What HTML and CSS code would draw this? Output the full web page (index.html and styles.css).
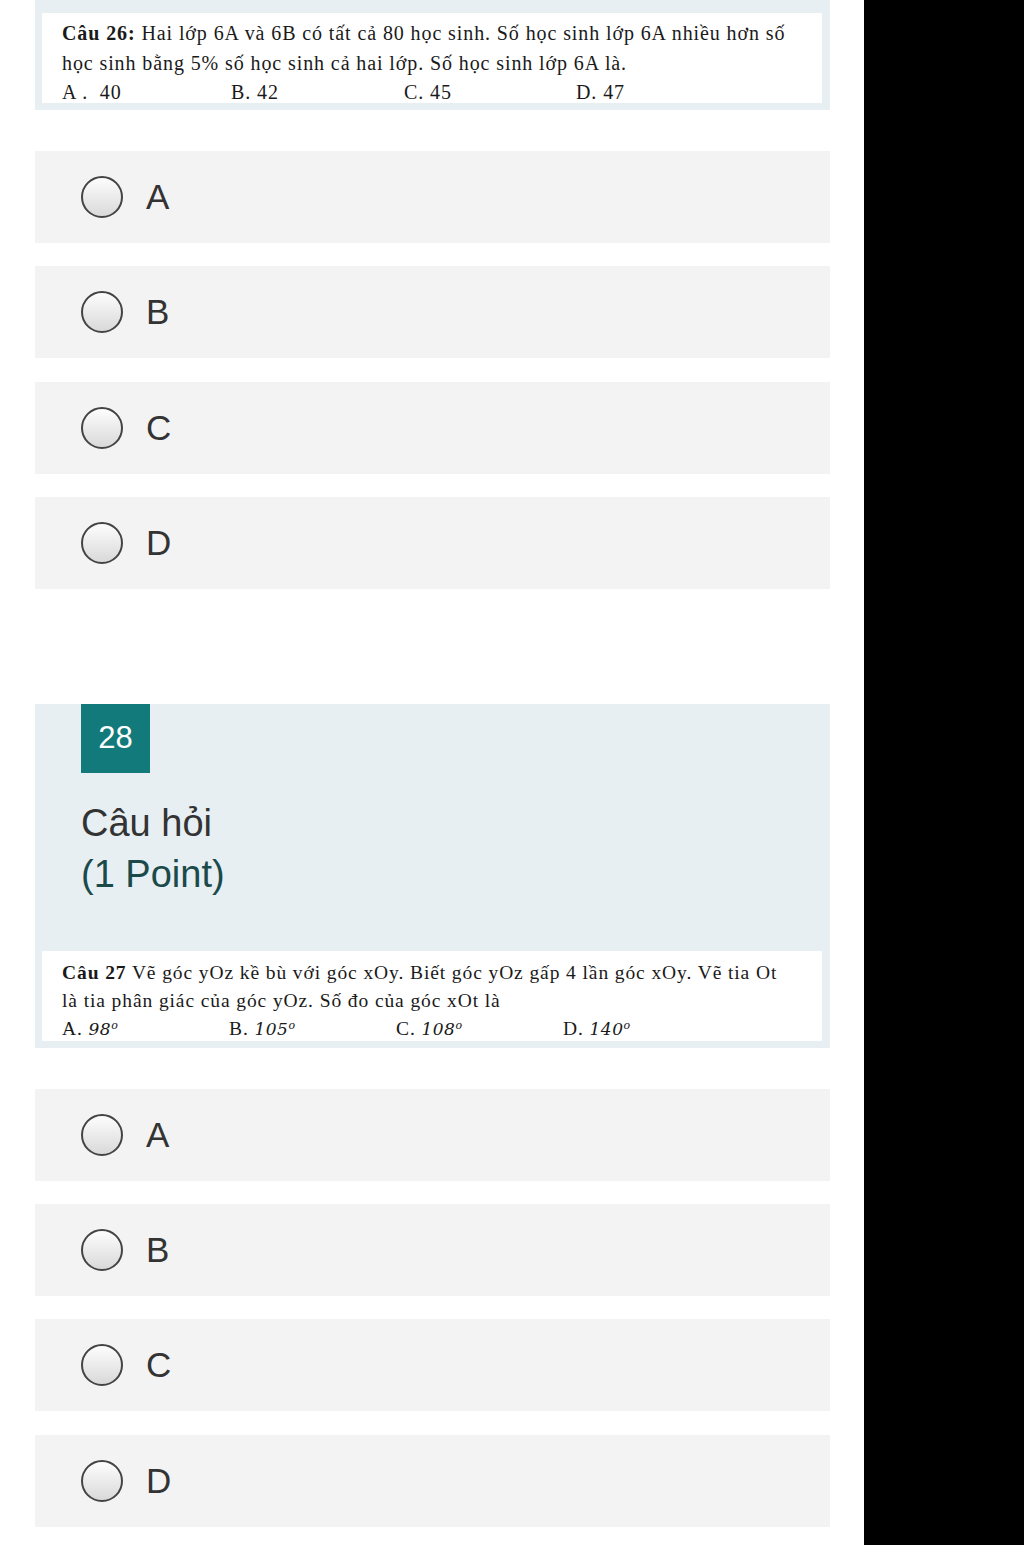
FILE: index.html
```html
<!DOCTYPE html>
<html lang="vi">
<head>
    <meta charset="UTF-8">
    <meta name="viewport" content="width=device-width, initial-scale=1.0">
    <title>Câu hỏi</title>
    <link rel="stylesheet" href="styles.css">
</head>
<body>
    <div class="page">
        <main class="form">
            <!-- Câu 27 (phần cuối) -->
            <section class="question question-tail">
                <div class="q-image q-image-26">
                    <p><b>Câu 26:</b> Hai lớp 6A và 6B có tất cả 80 học sinh. Số học sinh lớp 6A nhiều hơn số</p>
                    <p>học sinh bằng 5% số học sinh cả hai lớp. Số học sinh lớp 6A là.</p>
                    <div class="q-options opts-26">
                        <span>A .&nbsp; 40</span>
                        <span>B. 42</span>
                        <span>C. 45</span>
                        <span>D. 47</span>
                    </div>
                </div>
            </section>

            <div class="choices">
                <label class="choice"><span class="radio"></span><span class="letter">A</span></label>
                <label class="choice"><span class="radio"></span><span class="letter">B</span></label>
                <label class="choice"><span class="radio"></span><span class="letter">C</span></label>
                <label class="choice"><span class="radio"></span><span class="letter">D</span></label>
            </div>

            <!-- Câu 28 -->
            <section class="question">
                <div class="badge">28</div>
                <h2 class="q-title">Câu hỏi<br><span class="points">(1 Point)</span></h2>
                <div class="q-image q-image-27">
                    <p><b>Câu 27</b> Vẽ góc yOz kề bù với góc xOy. Biết góc yOz gấp 4 lần góc xOy. Vẽ tia Ot</p>
                    <p>là tia phân giác của góc yOz. Số đo của góc xOt là</p>
                    <div class="q-options opts-27">
                        <span>A. <i>98<sup>o</sup></i></span>
                        <span>B. <i>105<sup>o</sup></i></span>
                        <span>C. <i>108<sup>o</sup></i></span>
                        <span>D. <i>140<sup>o</sup></i></span>
                    </div>
                </div>
            </section>

            <div class="choices">
                <label class="choice"><span class="radio"></span><span class="letter">A</span></label>
                <label class="choice"><span class="radio"></span><span class="letter">B</span></label>
                <label class="choice"><span class="radio"></span><span class="letter">C</span></label>
                <label class="choice"><span class="radio"></span><span class="letter">D</span></label>
            </div>
        </main>
        <aside class="side"></aside>
    </div>
</body>
</html>
```

FILE: styles.css
```css
body {
    margin: 0;
    background: #fff;
    font-family: "Liberation Sans", Arial, sans-serif;
    color: #333;
}
.page {
    display: flex;
    width: 1024px;
    height: 1545px;
    overflow: hidden;
}
.form {
    width: 795px;
    padding-left: 35px;
    padding-right: 34px;
}
.side {
    flex: 1;
    background: #000;
}
.question {
    background: #e7eff3;
    padding: 0 8px 7px 7px;
}
.question-tail {
    padding-top: 13px;
}
.q-image {
    background: #fff;
    height: 90px;
    overflow: hidden;
    padding-left: 20px;
    box-sizing: border-box;
    font-family: "Liberation Serif", "Times New Roman", serif;
    color: #1a1a1a;
    letter-spacing: 0.9px;
}
.q-image p {
    margin: 0;
    white-space: nowrap;
}
.q-image-26 {
    font-size: 20px;
    line-height: 29.5px;
    padding-top: 6px;
}
.q-image-27 {
    font-size: 19.5px;
    line-height: 28px;
    padding-top: 8px;
}
.q-options {
    display: grid;
}
.opts-26 {
    grid-template-columns: 169px 173px 172px 1fr;
}
.opts-27 {
    grid-template-columns: 167px 167px 167px 1fr;
}
.q-options i {
    font-family: "DejaVu Serif", serif;
    font-size: 17px;
    letter-spacing: 0.5px;
}
.q-options sup {
    font-size: 11px;
    vertical-align: 6px;
    line-height: 0;
}
.choices {
    display: flex;
    flex-direction: column;
    gap: 23.3px;
    padding: 41px 0 115px;
}
.choices:last-child {
    padding-bottom: 0;
}
.choice {
    display: flex;
    align-items: center;
    height: 92px;
    background: #f3f3f3;
    padding-left: 46px;
}
.radio {
    width: 38px;
    height: 38px;
    border: 2px solid #444;
    border-radius: 50%;
    background: linear-gradient(#fdfdfd, #d9d9d9);
}
.letter {
    margin-left: 23px;
    font-size: 35px;
    color: #333;
}
.badge {
    width: 69px;
    height: 69px;
    margin-left: 39px;
    background: #127a7a;
    color: #fff;
    font-size: 31px;
    display: flex;
    align-items: center;
    justify-content: center;
}
.q-title {
    margin: 25px 0 51px 39px;
    font-size: 38px;
    font-weight: normal;
    line-height: 51px;
    color: #333;
}
.points {
    color: #1b4a4a;
}
```
